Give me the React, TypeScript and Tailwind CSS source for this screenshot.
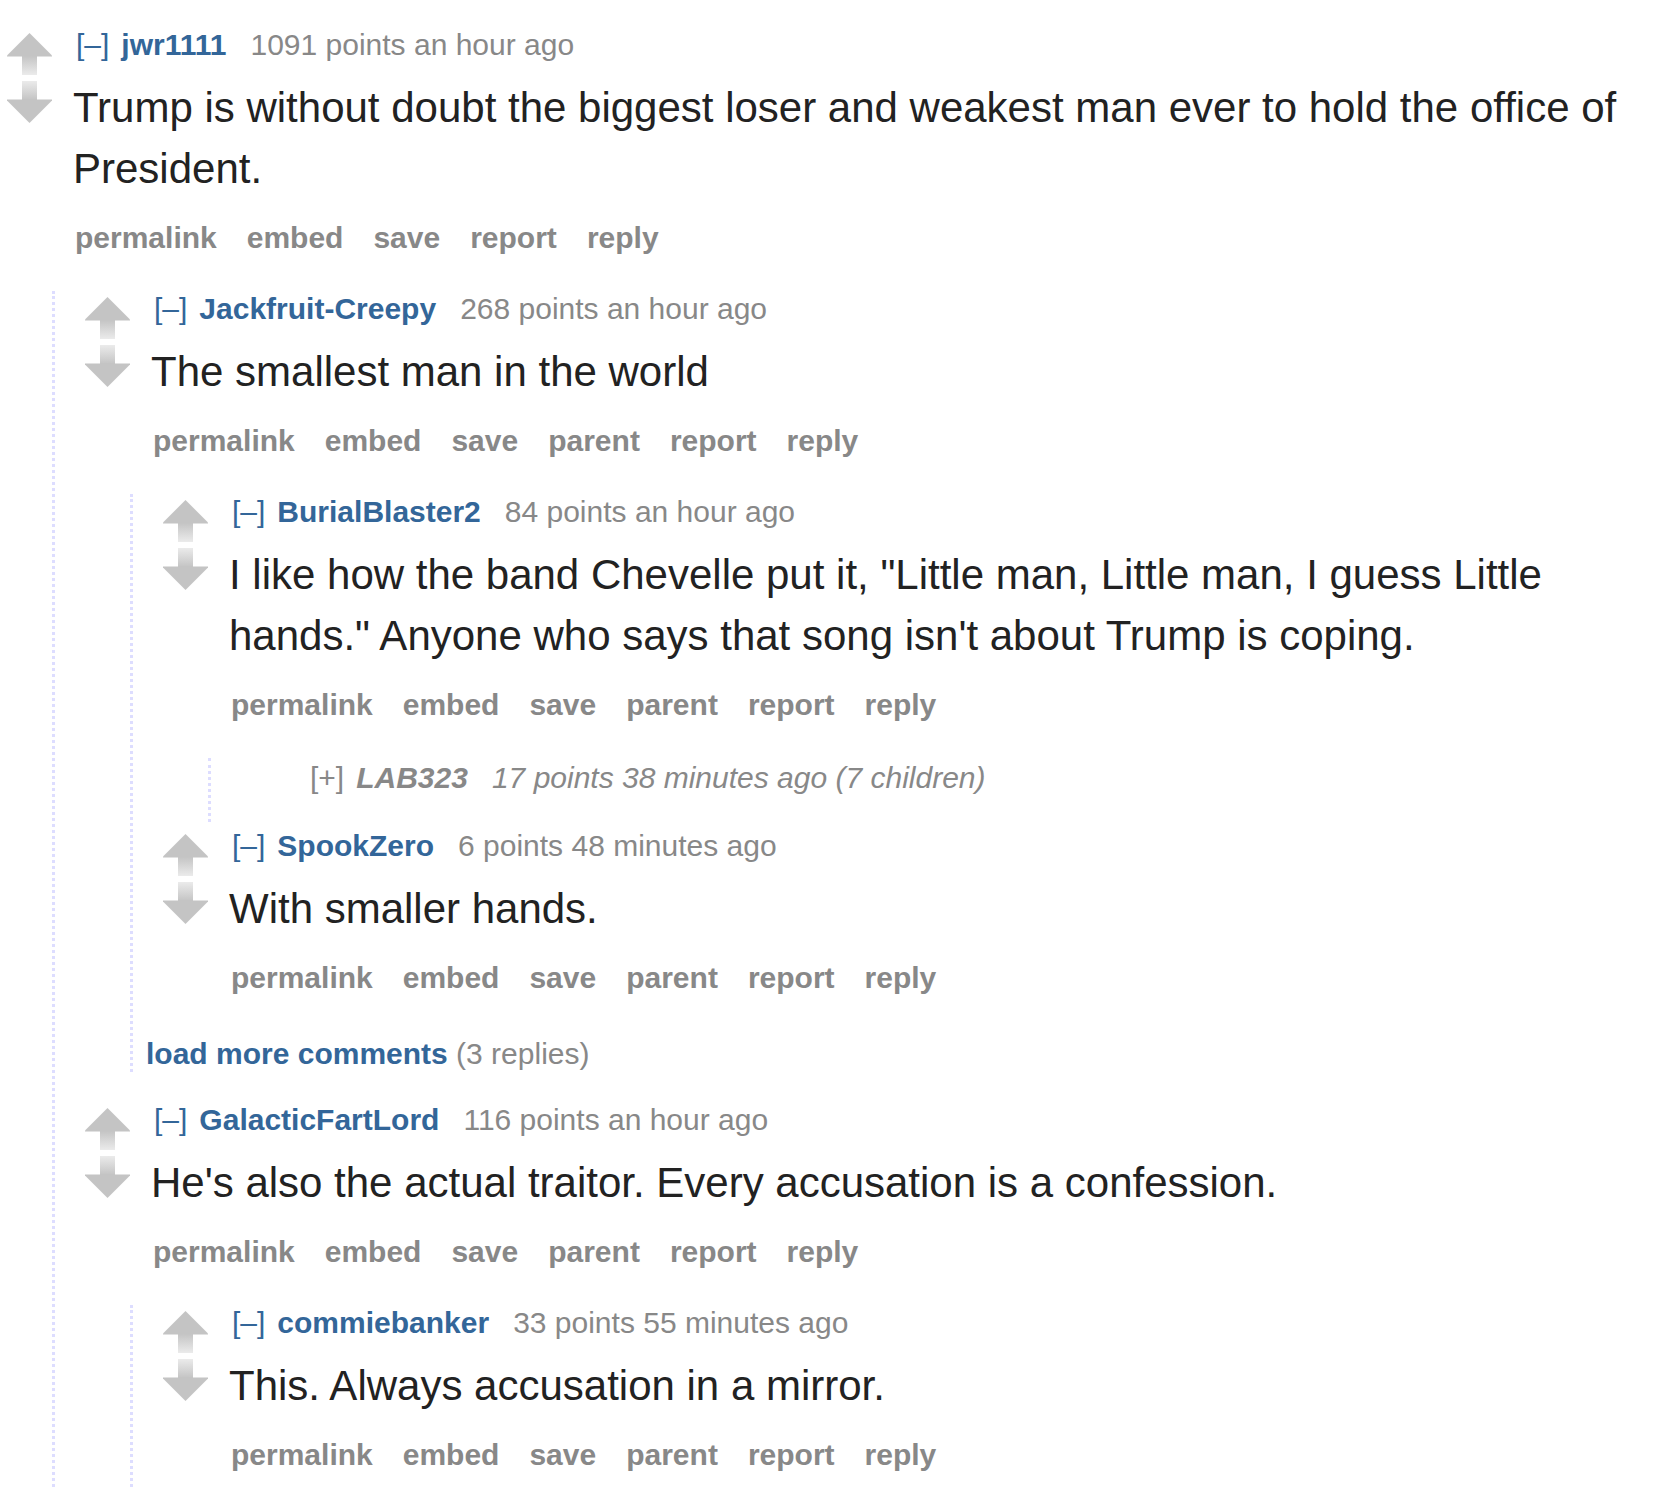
import { useId, type ReactNode } from "react";

function gid(raw: string) {
  return "g" + raw.replace(/[^a-zA-Z0-9]/g, "");
}

function UpArrow() {
  const id = gid(useId());
  return (
    <svg width="45" height="42" viewBox="0 0 45 42" className="block">
      <defs>
        <linearGradient id={id} x1="0" y1="0" x2="0" y2="1">
          <stop offset="0" stopColor="#c4c4c4" />
          <stop offset="1" stopColor="#ebebeb" />
        </linearGradient>
      </defs>
      <polygon points="22.5,0 45,22.5 45,23.5 0,23.5 0,22.5" fill="#c4c4c4" />
      <rect x="15" y="23" width="15" height="19" fill={`url(#${id})`} />
    </svg>
  );
}

function DownArrow() {
  const id = gid(useId());
  return (
    <svg width="45" height="42" viewBox="0 0 45 42" className="block">
      <defs>
        <linearGradient id={id} x1="0" y1="0" x2="0" y2="1">
          <stop offset="0" stopColor="#ebebeb" />
          <stop offset="1" stopColor="#c4c4c4" />
        </linearGradient>
      </defs>
      <rect x="15" y="0" width="15" height="19" fill={`url(#${id})`} />
      <polygon points="0,18.5 45,18.5 45,19.5 22.5,42 0,19.5" fill="#c4c4c4" />
    </svg>
  );
}

function Midcol({ hidden }: { hidden?: boolean }) {
  return (
    <div className="ml-[7px] mr-[21px] w-[45px] shrink-0 pt-[6px] flex flex-col gap-[6px]">
      {!hidden && (
        <>
          <UpArrow />
          <DownArrow />
        </>
      )}
    </div>
  );
}

function Children({ children, className = "" }: { children: ReactNode; className?: string }) {
  return (
    <div className={`ml-[52px] mt-[35px] border-l-[3px] border-dotted border-[#ddf] pl-[23px] ${className}`}>
      {children}
    </div>
  );
}

type CommentProps = {
  author: string;
  meta: string;
  body: string;
  parent?: boolean;
  className?: string;
  children?: ReactNode;
  childClass?: string;
};

function Comment({ author, meta, body, parent = true, className = "", children, childClass }: CommentProps) {
  const buttons = parent
    ? ["permalink", "embed", "save", "parent", "report", "reply"]
    : ["permalink", "embed", "save", "report", "reply"];
  return (
    <div className={className}>
      <div className="flex">
        <Midcol />
        <div className="flex-1 min-w-0">
          <div className="pl-[3px] text-[30px] leading-[36px] text-[#888] whitespace-nowrap">
            <span className="text-[#369]">[–]</span>
            <span className="ml-[12px] font-bold text-[#369]">{author}</span>
            <span className="ml-[24px]">{meta}</span>
          </div>
          <div className="mt-[14px] text-[42px] leading-[61px] text-[#222]">{body}</div>
          <div className="mt-[21px] flex gap-[30px] pl-[2px] text-[30px] leading-[36px] font-bold text-[#888]">
            {buttons.map((b) => (
              <span key={b}>{b}</span>
            ))}
          </div>
        </div>
      </div>
      {children && <Children className={childClass}>{children}</Children>}
    </div>
  );
}

function Collapsed() {
  return (
    <div className="flex pt-[2px] pb-[26px]">
      <Midcol hidden />
      <div className="pl-[3px] text-[30px] leading-[36px] text-[#888] italic whitespace-nowrap">
        <span className="not-italic">[+]</span>
        <span className="ml-[12px] font-bold">LAB323</span>
        <span className="ml-[24px]">17 points 38 minutes ago (7 children)</span>
      </div>
    </div>
  );
}

export default function App() {
  return (
    <div className="min-h-[1490px] bg-white pt-[27px] font-['Liberation_Sans',Arial,sans-serif]">
      <Comment
        author="jwr1111"
        meta="1091 points an hour ago"
        body="Trump is without doubt the biggest loser and weakest man ever to hold the office of President."
        parent={false}
      >
        <Comment
          author="Jackfruit-Creepy"
          meta="268 points an hour ago"
          body="The smallest man in the world"
        >
          <Comment
            author="BurialBlaster2"
            meta="84 points an hour ago"
            body={`I like how the band Chevelle put it, "Little man, Little man, I guess Little hands." Anyone who says that song isn't about Trump is coping.`}
          >
            <Collapsed />
          </Comment>
          <Comment
            author="SpookZero"
            meta="6 points 48 minutes ago"
            body="With smaller hands."
            className="mt-[6px]"
          />
          <div className="-ml-[10px] mt-[40px] text-[30px] leading-[36px] whitespace-nowrap">
            <span className="font-bold text-[#369]">load more comments</span>{" "}
            <span className="text-[#888]">(3 replies)</span>
          </div>
        </Comment>
        <Comment
          author="GalacticFartLord"
          meta="116 points an hour ago"
          body="He's also the actual traitor. Every accusation is a confession."
          className="mt-[30px]"
          childClass="pb-[20px]"
        >
          <Comment
            author="commiebanker"
            meta="33 points 55 minutes ago"
            body="This. Always accusation in a mirror."
          />
        </Comment>
      </Comment>
    </div>
  );
}
